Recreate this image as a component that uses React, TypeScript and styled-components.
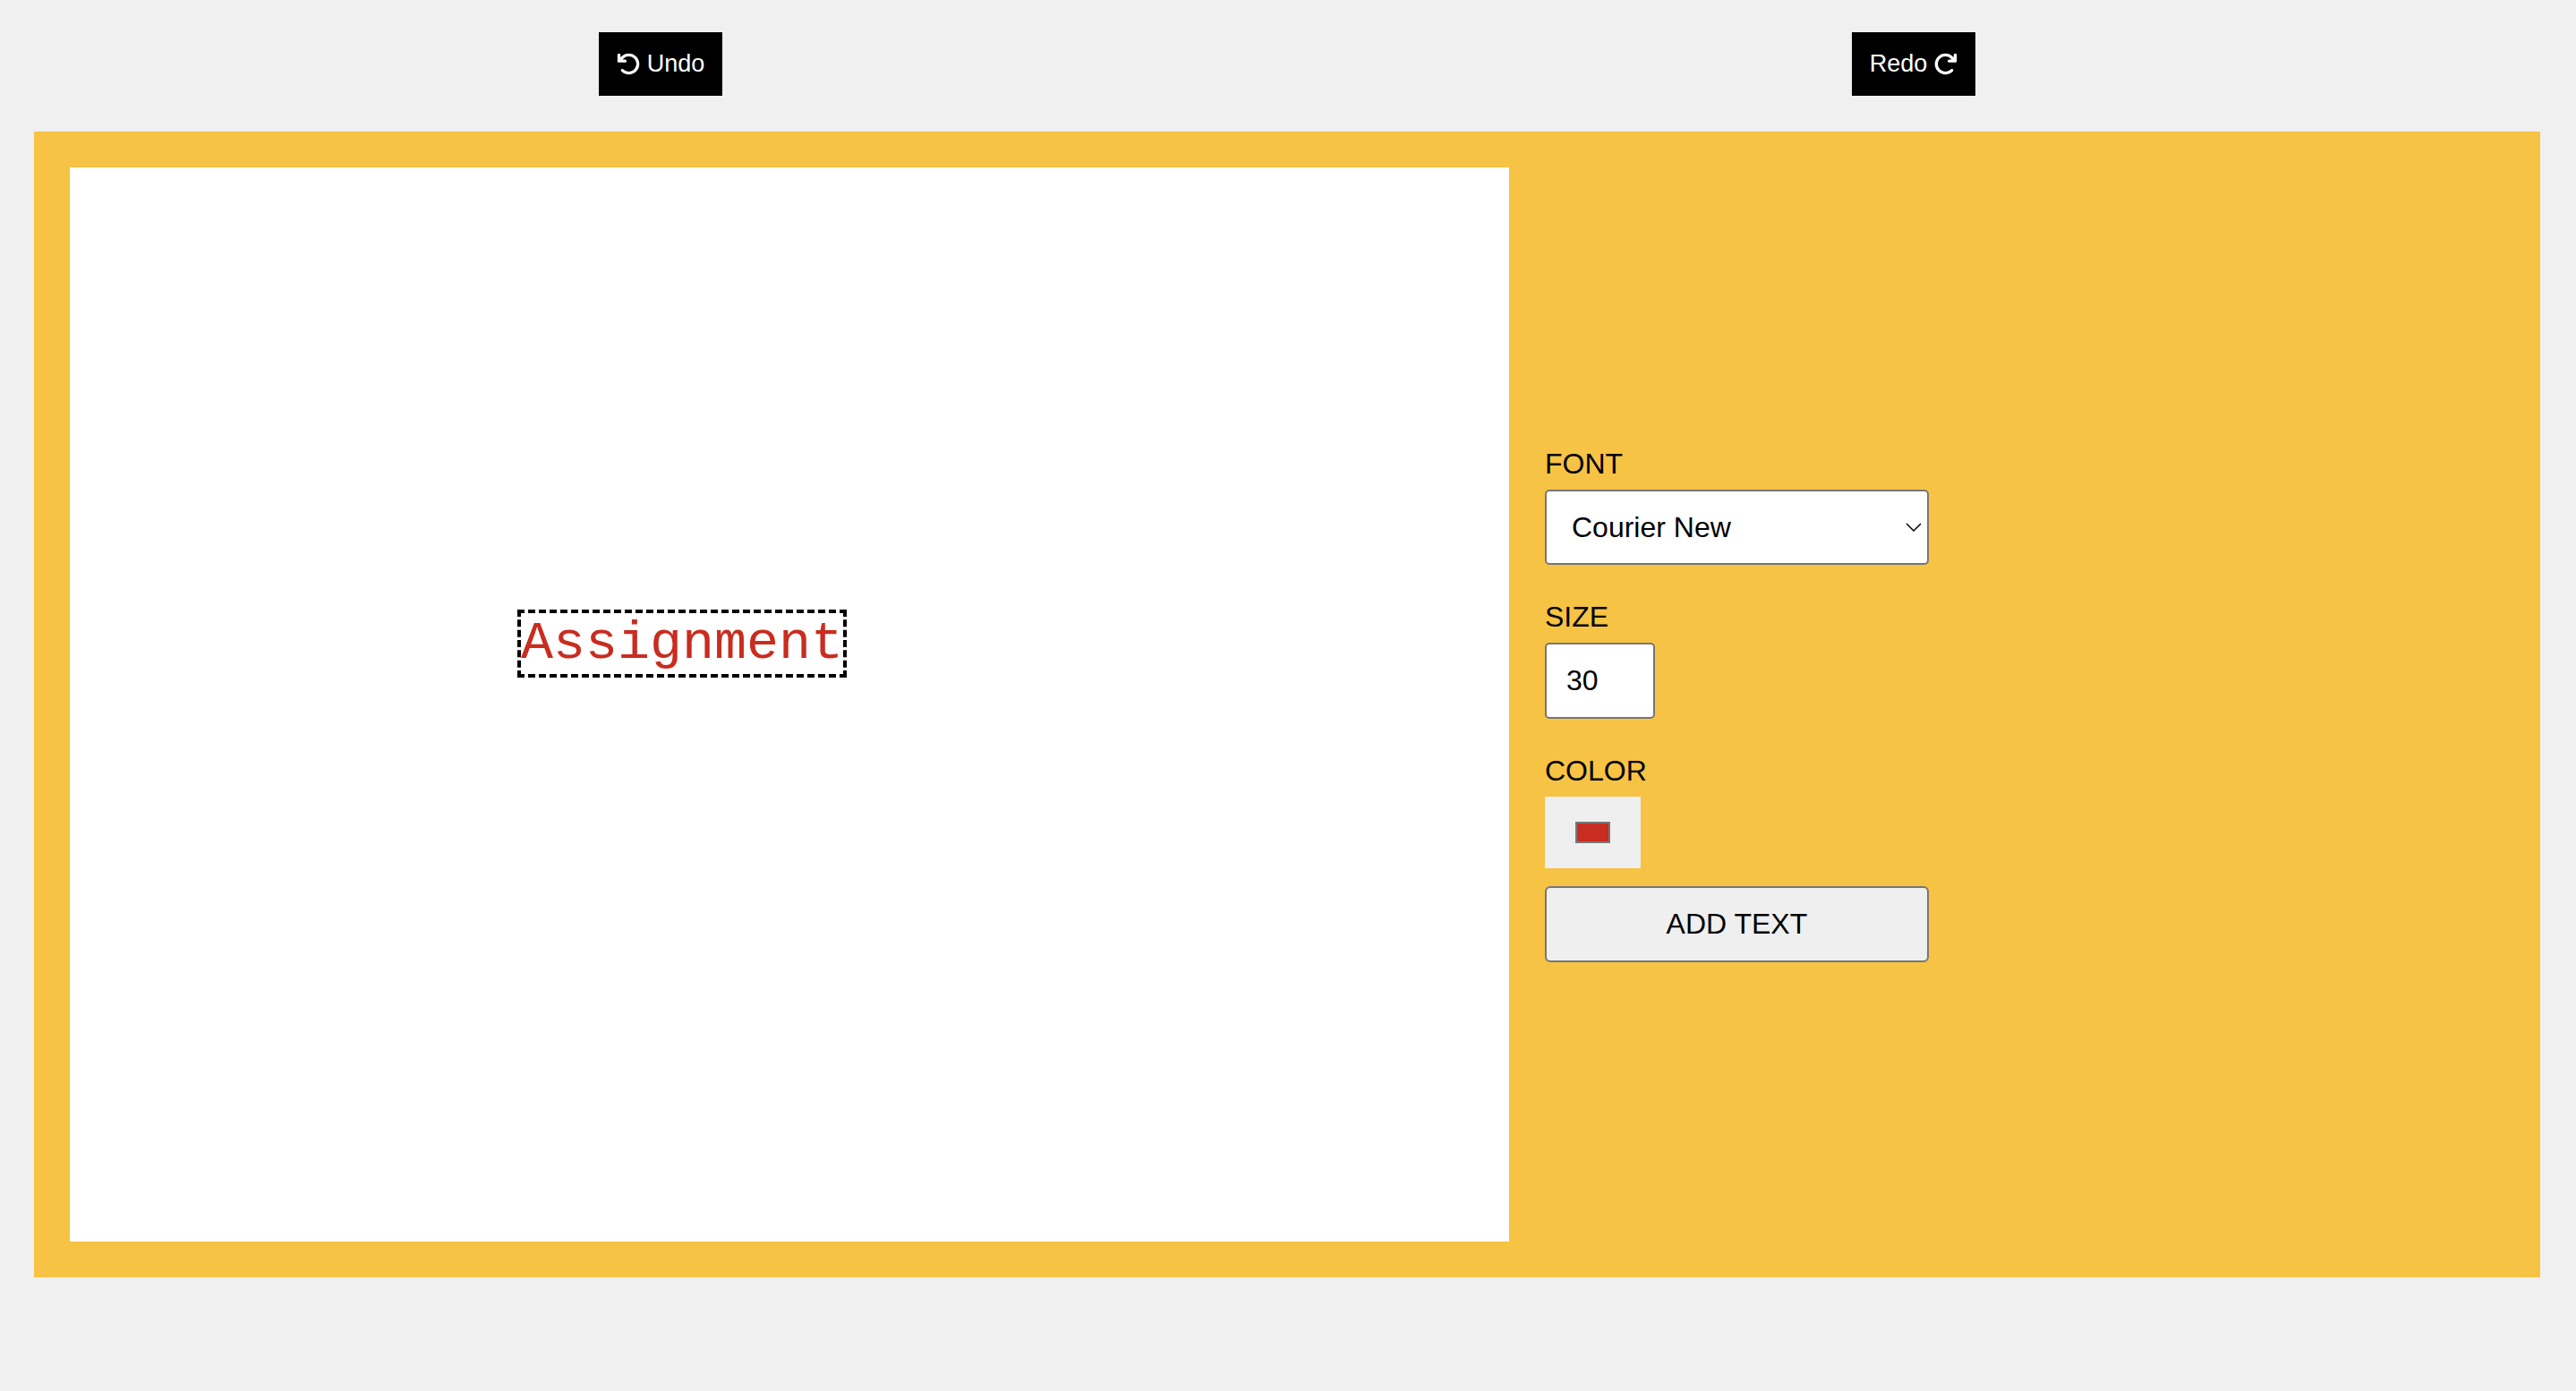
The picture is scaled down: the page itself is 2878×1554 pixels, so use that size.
import React, { useState } from "react";
import styled, { createGlobalStyle } from "styled-components";
import { FaArrowRotateLeft, FaArrowRotateRight } from "react-icons/fa6";

const GlobalStyle = createGlobalStyle`
  *, *::before, *::after { box-sizing: border-box; }
  body {
    margin: 0;
    min-height: 100vh;
    background: #f0f0f0;
    color: #000;
    font-family: Arial, "Liberation Sans", sans-serif;
    font-size: 32px;
    line-height: 36px;
  }
  button, input, select { font: inherit; color: inherit; }
`;

const Page = styled.main`
  padding: 36px 40px 36px 38px;
`;

const Toolbar = styled.div`
  display: flex;
  justify-content: space-around;
  margin-bottom: 40px;
`;

const ToolButton = styled.button`
  display: flex;
  align-items: center;
  gap: 7px;
  padding: 20px;
  border: 0;
  background: #000;
  color: #fff;
  font-size: 27px;
  line-height: 31px;
  cursor: pointer;

  svg {
    width: 27px;
    height: 27px;
  }
`;

const Editor = styled.section`
  display: grid;
  grid-template-columns: 3fr 2fr;
  align-items: center;
  gap: 40px;
  padding: 40px;
  background: #f6c344;
`;

const Canvas = styled.div`
  position: relative;
  min-height: 1200px;
  background: #fff;
`;

const TextNode = styled.div<{ $x: number; $y: number; $color: string; $size: number }>`
  position: absolute;
  left: ${(p) => p.$x}px;
  top: ${(p) => p.$y}px;
  border: 4px dashed #000;
  color: ${(p) => p.$color};
  font-family: "Courier New", "Liberation Mono", monospace;
  font-size: ${(p) => p.$size * 2}px;
  line-height: 68px;
  white-space: nowrap;
  cursor: move;
`;

const Controls = styled.form`
  display: flex;
  flex-direction: column;
  align-items: flex-start;
  gap: 40px;
`;

const Field = styled.div`
  display: flex;
  flex-direction: column;
  align-items: flex-start;
  gap: 11px;
  width: 40%;
`;

const ColorGroup = styled.div`
  display: flex;
  flex-direction: column;
  gap: 20px;
  width: 100%;
`;

const SelectBox = styled.div`
  display: grid;
  align-items: center;
  width: 100%;

  > * { grid-area: 1 / 1; }
`;

const Select = styled.select`
  appearance: none;
  width: 100%;
  height: 84px;
  padding: 0 28px;
  border: 2px solid #767676;
  border-radius: 5px;
  background: #fff;
`;

const Chevron = styled.svg`
  justify-self: end;
  width: 20px;
  height: 12px;
  margin-right: 7px;
  pointer-events: none;
`;

const SizeInput = styled.input`
  width: 123px;
  height: 85px;
  padding: 0 22px;
  border: 2px solid #767676;
  border-radius: 5px;
  background: #fff;
`;

const ColorInput = styled.input`
  width: 107px;
  height: 80px;
  padding: 28px 34px;
  border: 0;
  background: #efefef;

  &::-webkit-color-swatch-wrapper { padding: 0; }
  &::-webkit-color-swatch {
    border: 2px solid #777;
    border-radius: 0;
  }
`;

const AddButton = styled.button`
  width: 40%;
  height: 85px;
  border: 2px solid #767676;
  border-radius: 6px;
  background: #efefef;
  cursor: pointer;
`;

export default function App() {
  const [font, setFont] = useState("Courier New");
  const [size, setSize] = useState(30);
  const [color, setColor] = useState("#c92c20");

  return (
    <>
      <GlobalStyle />
      <Page>
        <Toolbar>
          <ToolButton type="button">
            <FaArrowRotateLeft aria-hidden />
            Undo
          </ToolButton>
          <ToolButton type="button">
            Redo
            <FaArrowRotateRight aria-hidden />
          </ToolButton>
        </Toolbar>
        <Editor>
          <Canvas>
            <TextNode $x={500} $y={494} $color={color} $size={size}>
              Assignment
            </TextNode>
          </Canvas>
          <Controls onSubmit={(e) => e.preventDefault()}>
            <Field>
              <label htmlFor="font">FONT</label>
              <SelectBox>
                <Select id="font" value={font} onChange={(e) => setFont(e.target.value)}>
                  <option>Courier New</option>
                </Select>
                <Chevron viewBox="0 0 20 12" fill="none" stroke="#000" strokeWidth="1.5" aria-hidden>
                  <path d="M2 2 L10 10 L18 2" />
                </Chevron>
              </SelectBox>
            </Field>
            <Field>
              <label htmlFor="size">SIZE</label>
              <SizeInput
                id="size"
                type="number"
                value={size}
                onChange={(e) => setSize(Number(e.target.value))}
              />
            </Field>
            <ColorGroup>
              <Field>
                <label htmlFor="color">COLOR</label>
                <ColorInput
                  id="color"
                  type="color"
                  value={color}
                  onChange={(e) => setColor(e.target.value)}
                />
              </Field>
              <AddButton type="submit">ADD TEXT</AddButton>
            </ColorGroup>
          </Controls>
        </Editor>
      </Page>
    </>
  );
}
